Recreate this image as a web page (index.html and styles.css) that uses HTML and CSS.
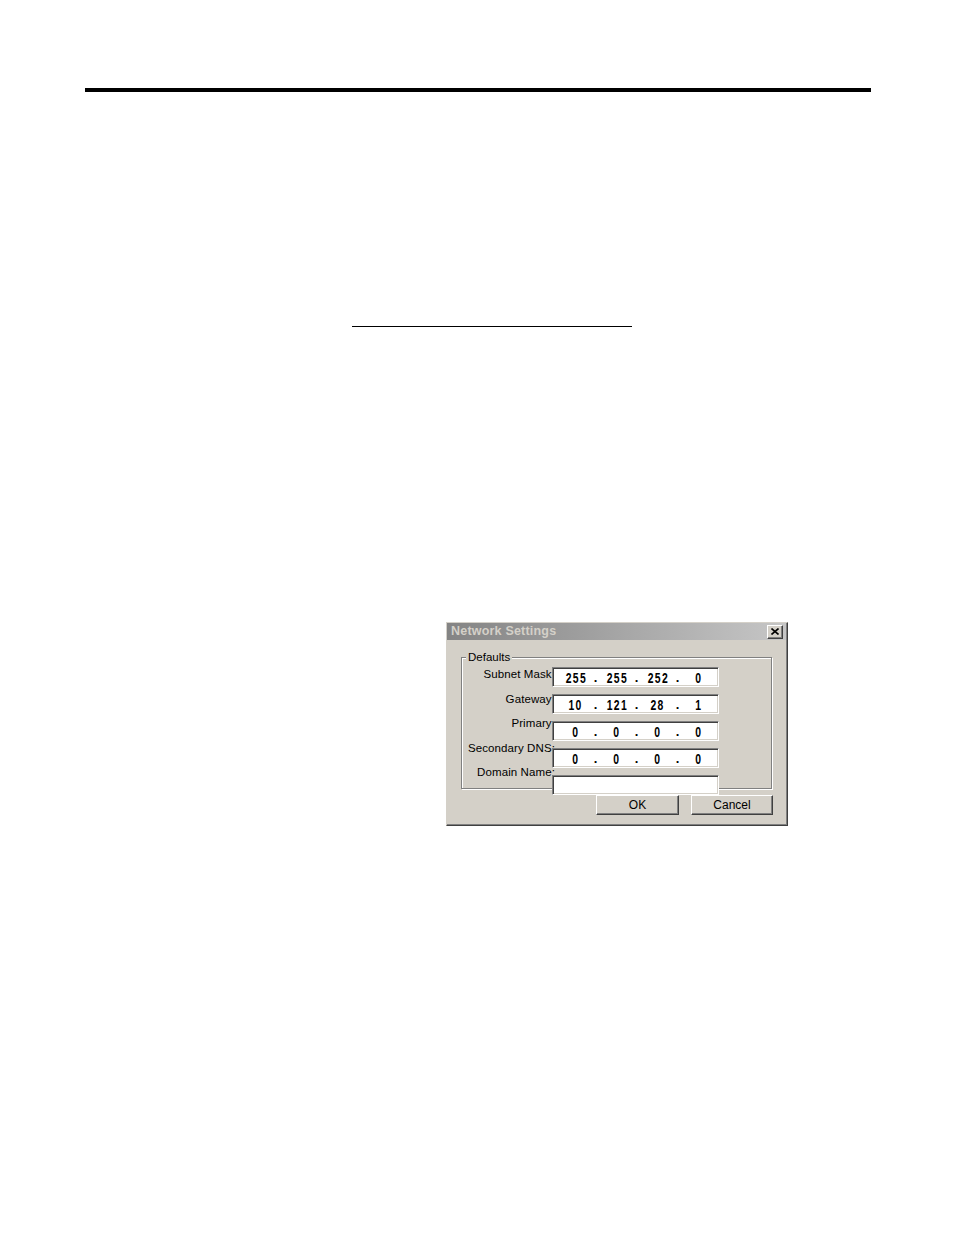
FILE: index.html
```html
<!DOCTYPE html>
<html>
<head>
<meta charset="utf-8">
<title>Network Settings</title>
<link rel="stylesheet" href="styles.css">
</head>
<body>
<div class="page">
  <div class="top-rule"></div>
  <div class="short-rule"></div>

  <div class="dialog">
    <div class="titlebar">
      <span class="title">Network Settings</span>
      <span class="close-btn">
        <svg width="8" height="7" viewBox="0 0 8 7"><path d="M0.5 0.5 L7.5 6.5 M7.5 0.5 L0.5 6.5" stroke="#000" stroke-width="1.6" fill="none"/></svg>
      </span>
    </div>

    <div class="groupbox">
      <span class="legend">Defaults</span>
      <div class="rows">
        <div class="labels">
          <div class="label">Subnet Mask:</div>
          <div class="label">Gateway:</div>
          <div class="label">Primary:</div>
          <div class="label">Secondary DNS:</div>
          <div class="label">Domain Name:</div>
        </div>
        <div class="fields">
          <div class="field ip">
            <span class="oct"><b>255</b></span><span class="dot">.</span><span class="oct"><b>255</b></span><span class="dot">.</span><span class="oct"><b>252</b></span><span class="dot">.</span><span class="oct"><b>0</b></span>
          </div>
          <div class="field ip">
            <span class="oct"><b>10</b></span><span class="dot">.</span><span class="oct"><b>121</b></span><span class="dot">.</span><span class="oct"><b>28</b></span><span class="dot">.</span><span class="oct"><b>1</b></span>
          </div>
          <div class="field ip">
            <span class="oct"><b>0</b></span><span class="dot">.</span><span class="oct"><b>0</b></span><span class="dot">.</span><span class="oct"><b>0</b></span><span class="dot">.</span><span class="oct"><b>0</b></span>
          </div>
          <div class="field ip">
            <span class="oct"><b>0</b></span><span class="dot">.</span><span class="oct"><b>0</b></span><span class="dot">.</span><span class="oct"><b>0</b></span><span class="dot">.</span><span class="oct"><b>0</b></span>
          </div>
          <div class="field"></div>
        </div>
      </div>
    </div>

    <div class="buttons">
      <span class="btn btn-ok">OK</span>
      <span class="btn btn-cancel">Cancel</span>
    </div>
  </div>
</div>
</body>
</html>
```

FILE: styles.css
```css
html, body {
  margin: 0;
  padding: 0;
  background: #ffffff;
}

body {
  font-family: "Liberation Sans", Arial, sans-serif;
  color: #000;
}

.page {
  width: 954px;
  min-height: 1235px;
  overflow: hidden;
}

.top-rule {
  margin: 88px 0 0 85px;
  width: 786px;
  height: 4px;
  background: #000;
}

.short-rule {
  margin: 234px 0 0 352px;
  width: 280px;
  height: 1px;
  background: #000;
}

/* ---------- dialog ---------- */
.dialog {
  box-sizing: border-box;
  margin: 295px 0 0 446px;
  width: 342px;
  height: 204px;
  background: #d4d0c8;
  border: 1px solid;
  border-color: #d4d0c8 #404040 #404040 #d4d0c8;
  box-shadow: inset -1px -1px 0 #808080;
  font-size: 11.5px;
}

.titlebar {
  height: 17px;
  margin-right: 1px;
  background: linear-gradient(to right, #848484, #c6c6c6);
  display: flex;
  align-items: center;
  justify-content: space-between;
  padding: 0 3px 0 4px;
}

.title {
  font-weight: bold;
  font-size: 12.5px;
  letter-spacing: 0.2px;
  color: #d4d0c8;
  line-height: 17px;
}

.close-btn {
  box-sizing: border-box;
  width: 16px;
  height: 14px;
  background: #d4d0c8;
  border: 1px solid;
  border-color: #ffffff #404040 #404040 #ffffff;
  box-shadow: inset -1px -1px 0 #808080;
  display: flex;
  align-items: center;
  justify-content: center;
  padding: 0 1px 1px 0;
}

.close-btn svg {
  display: block;
}

/* ---------- group box ---------- */
.groupbox {
  box-sizing: border-box;
  margin: 17px 0 0 14px;
  width: 311px;
  height: 132px;
  border: 1px solid #808080;
  box-shadow: inset 1px 1px 0 #ffffff, 1px 1px 0 #ffffff;
}

.legend {
  display: block;
  width: fit-content;
  height: 14px;
  line-height: 14px;
  margin: -8px 0 -6px 4px;
  padding: 0 2px;
  background: #d4d0c8;
}

.rows {
  display: flex;
  align-items: flex-start;
}

.labels {
  width: 93px;
  padding-top: 4px;
  flex: none;
}

.label {
  line-height: 24.5px;
  text-align: right;
  white-space: nowrap;
  letter-spacing: 0.1px;
}

.fields {
  margin-left: -3px;
  padding-top: 9px;
  display: flex;
  flex-direction: column;
  gap: 7px;
  flex: none;
}

.field {
  box-sizing: border-box;
  width: 167px;
  height: 20px;
  background: #ffffff;
  border: 1px solid;
  border-color: #808080 #ffffff #ffffff #808080;
  box-shadow: inset 1px 1px 0 #404040, inset -1px -1px 0 #d4d0c8;
}

.ip {
  display: flex;
  align-items: center;
  padding-left: 7px;
  padding-top: 2px;
}

.oct {
  width: 30px;
  text-align: center;
  line-height: 16px;
}

.oct b {
  display: inline-block;
  font-size: 14px;
  font-weight: bold;
  letter-spacing: 1.8px;
  margin-right: -1.8px;
  transform: scaleX(0.74);
}

.dot {
  width: 11px;
  text-align: center;
  font-weight: bold;
  font-size: 13px;
  line-height: 16px;
}

/* ---------- buttons ---------- */
.buttons {
  display: flex;
  justify-content: flex-end;
  gap: 12px;
  margin: 6px 14px 0 0;
}

.btn {
  box-sizing: border-box;
  height: 20px;
  background: #d4d0c8;
  border: 1px solid;
  border-color: #ffffff #404040 #404040 #ffffff;
  box-shadow: inset -1px -1px 0 #808080;
  display: flex;
  align-items: center;
  justify-content: center;
  line-height: 18px;
  font-size: 12px;
}

.btn-ok {
  width: 83px;
}

.btn-cancel {
  width: 82px;
}
```
